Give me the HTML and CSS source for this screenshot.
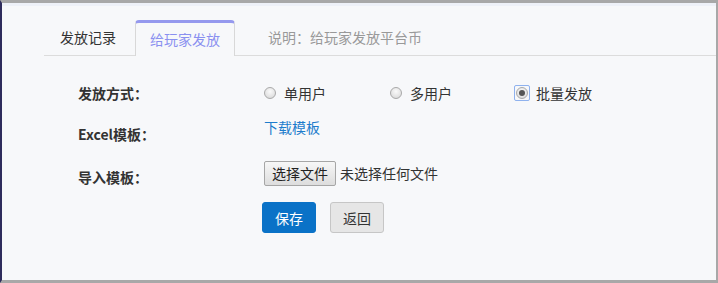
FILE: index.html
```html
<!DOCTYPE html>
<html>

<head>
  <meta charset="UTF-8">
  <meta name="viewport" content="width=device-width, initial-scale=1.0">
  <title>给玩家发放</title>
  <link rel="stylesheet" href="styles.css">
</head>

<body>
  <div class="frame">
    <div class="strip"></div>

    <div class="tabs">
      <div class="tab">发放记录</div>
      <div class="tab active">给玩家发放</div>
      <div class="tip">说明：给玩家发放平台币</div>
    </div>

    <div class="form">
      <div class="row row-type">
        <div class="label">发放方式：</div>
        <div class="choices">
          <label class="choice"><span class="radio"></span>单用户</label>
          <label class="choice"><span class="radio"></span>多用户</label>
          <label class="choice"><span class="radio checked"></span>批量发放</label>
        </div>
      </div>

      <div class="row row-excel">
        <div class="label">Excel模板：</div>
        <a class="link" href="#">下载模板</a>
      </div>

      <div class="row row-file">
        <div class="label">导入模板：</div>
        <div class="file">
          <button class="file-btn" type="button">选择文件</button>
          <span class="file-name">未选择任何文件</span>
        </div>
      </div>

      <div class="actions">
        <button class="btn btn-save" type="button">保存</button>
        <button class="btn btn-back" type="button">返回</button>
      </div>
    </div>
  </div>
</body>

</html>
```

FILE: styles.css
```css
html,
body {
  margin: 0;
  padding: 0;
}

body {
  font-family: "Noto Sans CJK SC", "Liberation Sans", sans-serif;
  font-size: 14px;
  color: #333;
}

.frame {
  box-sizing: border-box;
  width: 718px;
  height: 283px;
  background: #f7f8fa;
  border-top: 3px solid #a8a8a8;
  border-left: 2px solid #2e2c5c;
  border-right: 2px solid #a8a8a8;
  border-bottom: 3px solid #a8a8a8;
}

.strip {
  height: 3px;
  background: #eef1f8;
}

/* tabs */
.tabs {
  display: flex;
  align-items: flex-start;
  margin: 14px 0 0 42px;
  border-bottom: 1px solid #dcdcdc;
}

.tab {
  height: 35px;
  line-height: 35px;
  padding: 0 16px;
  color: #333;
}

.tab.active {
  box-sizing: border-box;
  height: 36px;
  line-height: 32px;
  margin: 0 0 -1px 3px;
  padding: 0 14px;
  color: #8a90f0;
  background: #f7f8fa;
  border-top: 3px solid #9599ee;
  border-left: 1px solid #d8d8d8;
  border-right: 1px solid #d8d8d8;
  border-radius: 4px 4px 0 0;
}

.tip {
  height: 35px;
  line-height: 35px;
  margin-left: 33px;
  color: #999;
}

/* form */
.form {
  padding-left: 76px;
}

.row {
  display: flex;
  align-items: center;
  height: 30px;
}

.label {
  width: 186px;
  font-weight: bold;
  color: #333;
  line-height: 20px;
}

.row-type {
  margin-top: 22px;
}

.row-excel {
  margin-top: 8px;
}

.row-excel .label {
  padding-top: 6px;
}

.row-file {
  margin-top: 12px;
}

.row-file .label {
  padding-top: 8px;
}

.choices {
  display: flex;
}

.choice {
  display: flex;
  align-items: center;
  width: 126px;
  line-height: 20px;
}

.radio {
  position: relative;
  box-sizing: border-box;
  width: 12px;
  height: 12px;
  margin-right: 8px;
  border: 1px solid #a9a9a9;
  border-radius: 50%;
  background: radial-gradient(circle at 50% 35%, #fafafa 0%, #e4e4e4 60%, #d2d2d2 100%);
}

.radio.checked::before {
  content: "";
  position: absolute;
  left: 2px;
  top: 2px;
  width: 6px;
  height: 6px;
  border-radius: 50%;
  background: #555;
}

.radio.checked::after {
  content: "";
  position: absolute;
  left: -3px;
  top: -3px;
  right: -3px;
  bottom: -3px;
  border: 1.5px solid #8fb2ee;
  border-radius: 2px;
}

.link {
  color: #1d7ccc;
  text-decoration: none;
  line-height: 20px;
  padding-bottom: 8px;
}

.file {
  display: flex;
  align-items: center;
}

.file-btn {
  box-sizing: border-box;
  height: 25px;
  width: 72px;
  padding: 0;
  margin-right: 4px;
  font-family: inherit;
  font-size: 14px;
  color: #222;
  border: 1px solid #a6a6a6;
  border-radius: 2px;
  background: linear-gradient(#f7f7f7, #dddddd);
}

.file-name {
  color: #333;
}

/* buttons */
.actions {
  display: flex;
  margin: 14px 0 0 184px;
}

.btn {
  box-sizing: border-box;
  width: 54px;
  height: 31px;
  padding: 0;
  font-family: inherit;
  font-size: 14px;
  border-radius: 3px;
}

.btn-save {
  color: #fff;
  background: #0a72c7;
  border: 1px solid #0a72c7;
}

.btn-back {
  margin-left: 14px;
  color: #333;
  background: #e6e6e6;
  border: 1px solid #c6c6c6;
}
```
